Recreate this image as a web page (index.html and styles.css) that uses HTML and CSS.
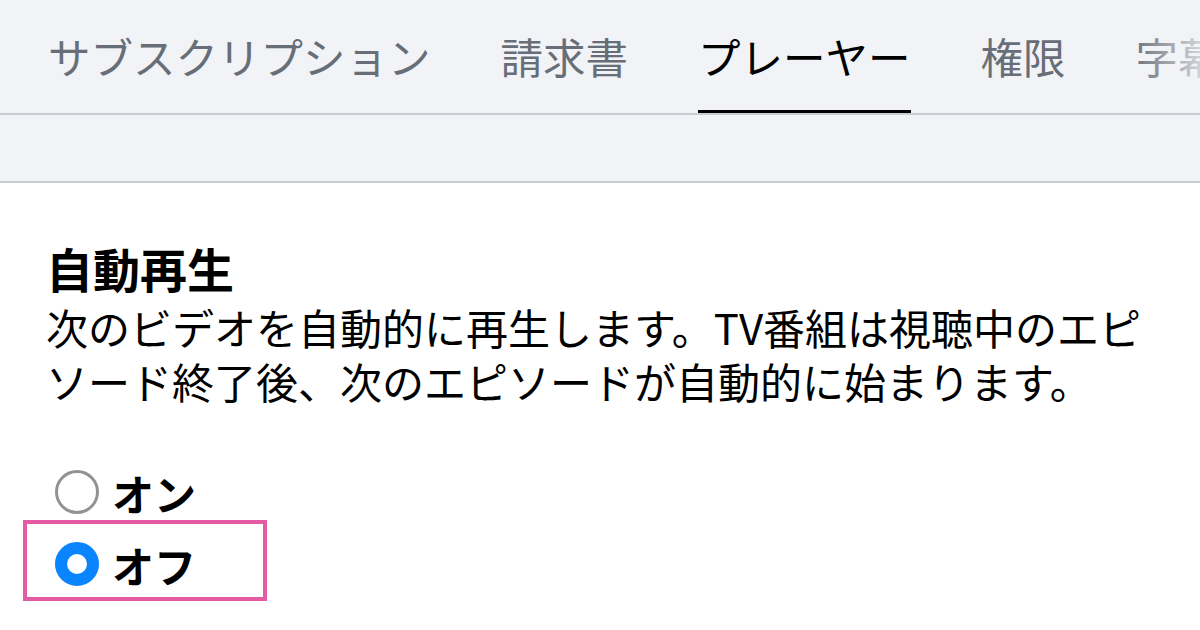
FILE: index.html
```html
<!DOCTYPE html>
<html lang="ja">
<head>
    <meta charset="UTF-8">
    <meta name="viewport" content="width=device-width, initial-scale=1.0">
    <title>プレーヤー設定</title>
    <link rel="stylesheet" href="styles.css">
</head>
<body>
    <nav class="tabs">
        <a class="tab">サブスクリプション</a>
        <a class="tab">請求書</a>
        <a class="tab active">プレーヤー</a>
        <a class="tab">権限</a>
        <a class="tab">字幕</a>
    </nav>
    <div class="subbar"></div>

    <main class="content">
        <h2 class="section-title">自動再生</h2>
        <p class="section-desc">次のビデオを自動的に再生します。TV番組は視聴中のエピソード終了後、次のエピソードが自動的に始まります。</p>

        <div class="options">
            <label class="option">
                <input type="radio" name="autoplay" value="on">
                <span>オン</span>
            </label>
            <label class="option highlight">
                <input type="radio" name="autoplay" value="off" checked>
                <span>オフ</span>
            </label>
        </div>
    </main>
</body>
</html>
```

FILE: styles.css
```css
body {
    margin: 0;
    font-family: "Noto Sans CJK JP", "Noto Sans", sans-serif;
    background-color: #fff;
    color: #000;
    overflow: hidden;
}

.tabs {
    position: relative;
    display: flex;
    gap: 70px;
    padding-left: 48px;
    background-color: #f1f3f6;
    border-bottom: 2px solid #c9ccd2;
    white-space: nowrap;
    overflow: hidden;
}

/* fade out the tabs that run off the right edge */
.tabs::after {
    content: "";
    position: absolute;
    top: 0;
    right: 0;
    bottom: -2px;
    width: 70px;
    background: linear-gradient(to right, rgba(241,243,246,0), rgba(241,243,246,0.75));
}

.tab {
    display: flex;
    align-items: center;
    height: 110px;
    font-size: 42.5px;
    color: #686e77;
    border-bottom: 3px solid transparent;
    cursor: pointer;
}

.tab.active {
    color: #000;
    border-bottom-color: #000;
}

.subbar {
    height: 66px;
    background-color: #f1f3f6;
    border-bottom: 2px solid #c9ccd2;
}

.content {
    padding: 57px 0 0 46px;
    max-width: 1128px;
}

.section-title {
    margin: 0;
    font-size: 47px;
    font-weight: bold;
    line-height: 56px;
}

.section-desc {
    margin: 4px 0 0;
    font-size: 42px;
    line-height: 54px;
}

.options {
    display: flex;
    flex-direction: column;
    align-items: flex-start;
    margin-top: 62px;
    padding-left: 9px;
}

.option {
    display: flex;
    align-items: center;
    gap: 13px;
    height: 44px;
    font-size: 42px;
    font-weight: bold;
    cursor: pointer;
}

.option input {
    appearance: none;
    -webkit-appearance: none;
    margin: 0;
    width: 44px;
    height: 44px;
    border-radius: 50%;
    border: 3px solid #929296;
    box-sizing: border-box;
}

.option input:checked {
    border: 12px solid #0a84ff;
}

.option.highlight {
    margin: 6px 0 0 -32px;
    padding: 18px 0 11px 28px;
    width: 208px;
    border: 4px solid #e45aa3;
}
```
